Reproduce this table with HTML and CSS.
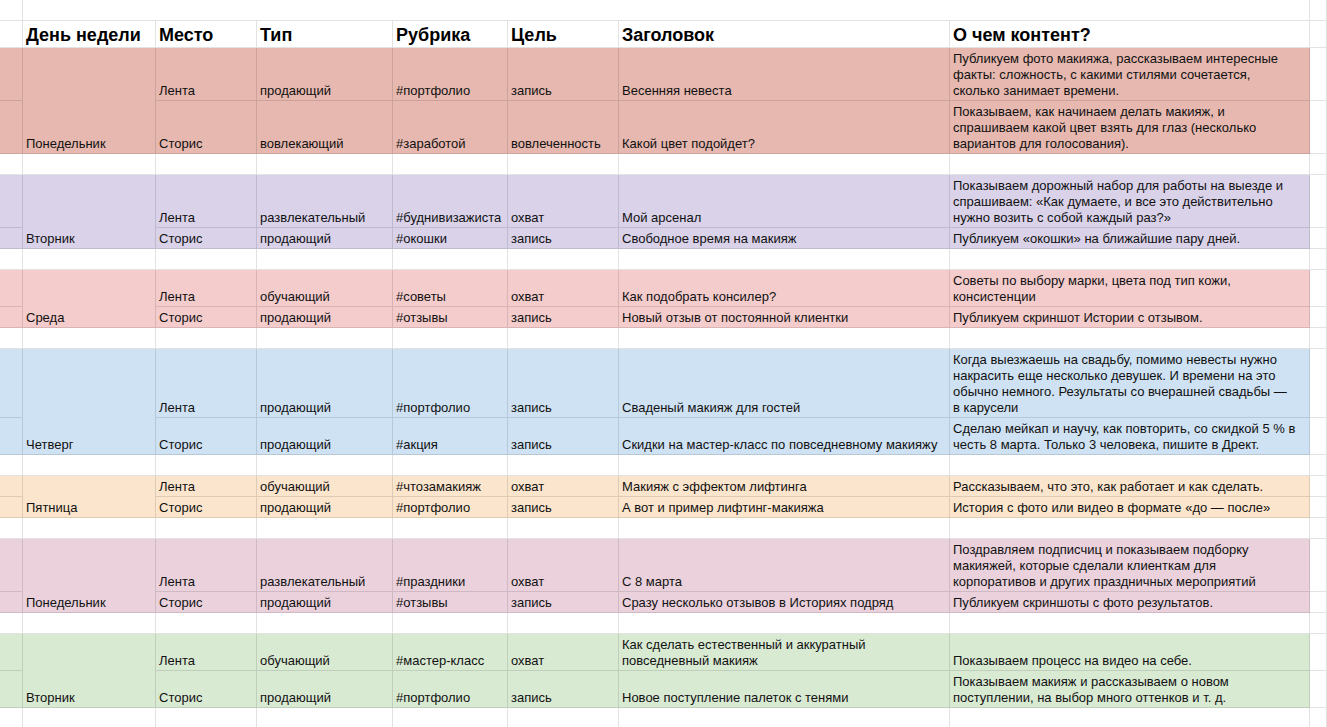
FILE: index.html
```html
<!DOCTYPE html>
<html lang="ru">
<head>
<meta charset="utf-8">
<title>Контент-план</title>
<link rel="stylesheet" href="styles.css">
</head>
<body>
<div class="sheet">
  <div class="c"></div><div class="c span7"></div><div class="c"></div>

  <div class="c"></div>
  <div class="c h">День недели</div>
  <div class="c h">Место</div>
  <div class="c h">Тип</div>
  <div class="c h">Рубрика</div>
  <div class="c h">Цель</div>
  <div class="c h">Заголовок</div>
  <div class="c h">О чем контент?</div>
  <div class="c"></div>

  <div class="grp pink">
    <div class="c"></div><div class="c day">Понедельник</div>
    <div class="c">Лента</div><div class="c">продающий</div><div class="c">#портфолио</div><div class="c">запись</div>
    <div class="c">Весенняя невеста</div>
    <div class="c">Публикуем фото макияжа, рассказываем интересные<br>факты: сложность, с какими стилями сочетается,<br>сколько занимает времени.</div>
    <div class="c edge"></div>
    <div class="c"></div>
    <div class="c">Сторис</div><div class="c">вовлекающий</div><div class="c">#заработой</div><div class="c">вовлеченность</div>
    <div class="c">Какой цвет подойдет?</div>
    <div class="c">Показываем, как начинаем делать макияж, и<br>спрашиваем какой цвет взять для глаз (несколько<br>вариантов для голосования).</div>
    <div class="c edge"></div>
  </div>

  <div class="grp"><div class="c"></div><div class="c"></div><div class="c"></div><div class="c"></div><div class="c"></div><div class="c"></div><div class="c"></div><div class="c"></div><div class="c"></div></div>

  <div class="grp lav">
    <div class="c"></div><div class="c day">Вторник</div>
    <div class="c">Лента</div><div class="c">развлекательный</div><div class="c">#буднивизажиста</div><div class="c">охват</div>
    <div class="c">Мой арсенал</div>
    <div class="c">Показываем дорожный набор для работы на выезде и<br>спрашиваем: «Как думаете, и все это действительно<br>нужно возить с собой каждый раз?»</div>
    <div class="c edge"></div>
    <div class="c"></div>
    <div class="c">Сторис</div><div class="c">продающий</div><div class="c">#окошки</div><div class="c">запись</div>
    <div class="c">Свободное время на макияж</div>
    <div class="c">Публикуем «окошки» на ближайшие пару дней.</div>
    <div class="c edge"></div>
  </div>

  <div class="grp"><div class="c"></div><div class="c"></div><div class="c"></div><div class="c"></div><div class="c"></div><div class="c"></div><div class="c"></div><div class="c"></div><div class="c"></div></div>

  <div class="grp rose">
    <div class="c"></div><div class="c day">Среда</div>
    <div class="c">Лента</div><div class="c">обучающий</div><div class="c">#советы</div><div class="c">охват</div>
    <div class="c">Как подобрать консилер?</div>
    <div class="c">Советы по выбору марки, цвета под тип кожи,<br>консистенции</div>
    <div class="c edge"></div>
    <div class="c"></div>
    <div class="c">Сторис</div><div class="c">продающий</div><div class="c">#отзывы</div><div class="c">запись</div>
    <div class="c">Новый отзыв от постоянной клиентки</div>
    <div class="c">Публикуем скриншот Истории с отзывом.</div>
    <div class="c edge"></div>
  </div>

  <div class="grp"><div class="c"></div><div class="c"></div><div class="c"></div><div class="c"></div><div class="c"></div><div class="c"></div><div class="c"></div><div class="c"></div><div class="c"></div></div>

  <div class="grp blue">
    <div class="c"></div><div class="c day">Четверг</div>
    <div class="c">Лента</div><div class="c">продающий</div><div class="c">#портфолио</div><div class="c">запись</div>
    <div class="c">Сваденый макияж для гостей</div>
    <div class="c">Когда выезжаешь на свадьбу, помимо невесты нужно<br>накрасить еще несколько девушек. И времени на это<br>обычно немного. Результаты со вчерашней свадьбы —<br>в карусели</div>
    <div class="c edge"></div>
    <div class="c"></div>
    <div class="c">Сторис</div><div class="c">продающий</div><div class="c">#акция</div><div class="c">запись</div>
    <div class="c">Скидки на мастер-класс по повседневному макияжу</div>
    <div class="c">Сделаю мейкап и научу, как повторить, со скидкой 5 % в<br>честь 8 марта. Только 3 человека, пишите в Дрект.</div>
    <div class="c edge"></div>
  </div>

  <div class="grp"><div class="c"></div><div class="c"></div><div class="c"></div><div class="c"></div><div class="c"></div><div class="c"></div><div class="c"></div><div class="c"></div><div class="c"></div></div>

  <div class="grp peach">
    <div class="c"></div><div class="c day">Пятница</div>
    <div class="c">Лента</div><div class="c">обучающий</div><div class="c">#чтозамакияж</div><div class="c">охват</div>
    <div class="c">Макияж с эффектом лифтинга</div>
    <div class="c">Рассказываем, что это, как работает и как сделать.</div>
    <div class="c edge"></div>
    <div class="c"></div>
    <div class="c">Сторис</div><div class="c">продающий</div><div class="c">#портфолио</div><div class="c">запись</div>
    <div class="c">А вот и пример лифтинг-макияжа</div>
    <div class="c">История с фото или видео в формате «до — после»</div>
    <div class="c edge"></div>
  </div>

  <div class="grp"><div class="c"></div><div class="c"></div><div class="c"></div><div class="c"></div><div class="c"></div><div class="c"></div><div class="c"></div><div class="c"></div><div class="c"></div></div>

  <div class="grp mag">
    <div class="c"></div><div class="c day">Понедельник</div>
    <div class="c">Лента</div><div class="c">развлекательный</div><div class="c">#праздники</div><div class="c">охват</div>
    <div class="c">С 8 марта</div>
    <div class="c">Поздравляем подписчиц и показываем подборку<br>макияжей, которые сделали клиенткам для<br>корпоративов и других праздничных мероприятий</div>
    <div class="c edge"></div>
    <div class="c"></div>
    <div class="c">Сторис</div><div class="c">продающий</div><div class="c">#отзывы</div><div class="c">запись</div>
    <div class="c">Сразу несколько отзывов в Историях подряд</div>
    <div class="c">Публикуем скриншоты с фото результатов.</div>
    <div class="c edge"></div>
  </div>

  <div class="grp"><div class="c"></div><div class="c"></div><div class="c"></div><div class="c"></div><div class="c"></div><div class="c"></div><div class="c"></div><div class="c"></div><div class="c"></div></div>

  <div class="grp green">
    <div class="c"></div><div class="c day">Вторник</div>
    <div class="c">Лента</div><div class="c">обучающий</div><div class="c">#мастер-класс</div><div class="c">охват</div>
    <div class="c">Как сделать естественный и аккуратный<br>повседневный макияж</div>
    <div class="c">Показываем процесс на видео на себе.</div>
    <div class="c edge"></div>
    <div class="c"></div>
    <div class="c">Сторис</div><div class="c">продающий</div><div class="c">#портфолио</div><div class="c">запись</div>
    <div class="c">Новое поступление палеток с тенями</div>
    <div class="c">Показываем макияж и рассказываем о новом<br>поступлении, на выбор много оттенков и т. д.</div>
    <div class="c edge"></div>
  </div>

  <div class="grp"><div class="c"></div><div class="c"></div><div class="c"></div><div class="c"></div><div class="c"></div><div class="c"></div><div class="c"></div><div class="c"></div><div class="c"></div></div>
</div>
</body>
</html>
```

FILE: styles.css
```css
html, body {
  margin: 0;
  padding: 0;
  background: #fff;
  overflow: hidden;
}

.sheet {
  display: grid;
  width: 100%;
  grid-template-columns: 23px 133px 101px 136px 115px 111px 331px 360px minmax(0, 1fr);
  grid-template-rows: 21px 27px 53px 53px 21px 53px 21px 21px 37px 21px 21px 69px 37px 21px 21px 21px 21px 53px 21px 21px 37px 37px 21px;
  font-family: "Liberation Sans", Arial, sans-serif;
  font-size: 13px;
  line-height: 16px;
  color: #111;
}

.grp {
  display: contents;
}

.c {
  box-sizing: border-box;
  border-right: 1px solid rgba(0, 0, 0, 0.115);
  border-bottom: 1px solid rgba(0, 0, 0, 0.115);
  padding: 0 3px 1px 3px;
  display: flex;
  flex-direction: column;
  justify-content: flex-end;
  white-space: nowrap;
  overflow: hidden;
  min-width: 0;
}

.span7 {
  grid-column: span 7;
}

.h {
  font-weight: bold;
  font-size: 18px;
  line-height: 22px;
  padding-bottom: 1px;
  color: #000;
}

.day {
  grid-row: span 2;
}

.pink > .c { background: #e6b8af; }
.lav > .c { background: #d9d2e9; }
.rose > .c { background: #f4cccc; }
.blue > .c { background: #cfe2f3; }
.peach > .c { background: #fce5cd; }
.mag > .c { background: #ead1dc; }
.green > .c { background: #d9ead3; }

.grp > .c.edge { background: #fff; }
```
